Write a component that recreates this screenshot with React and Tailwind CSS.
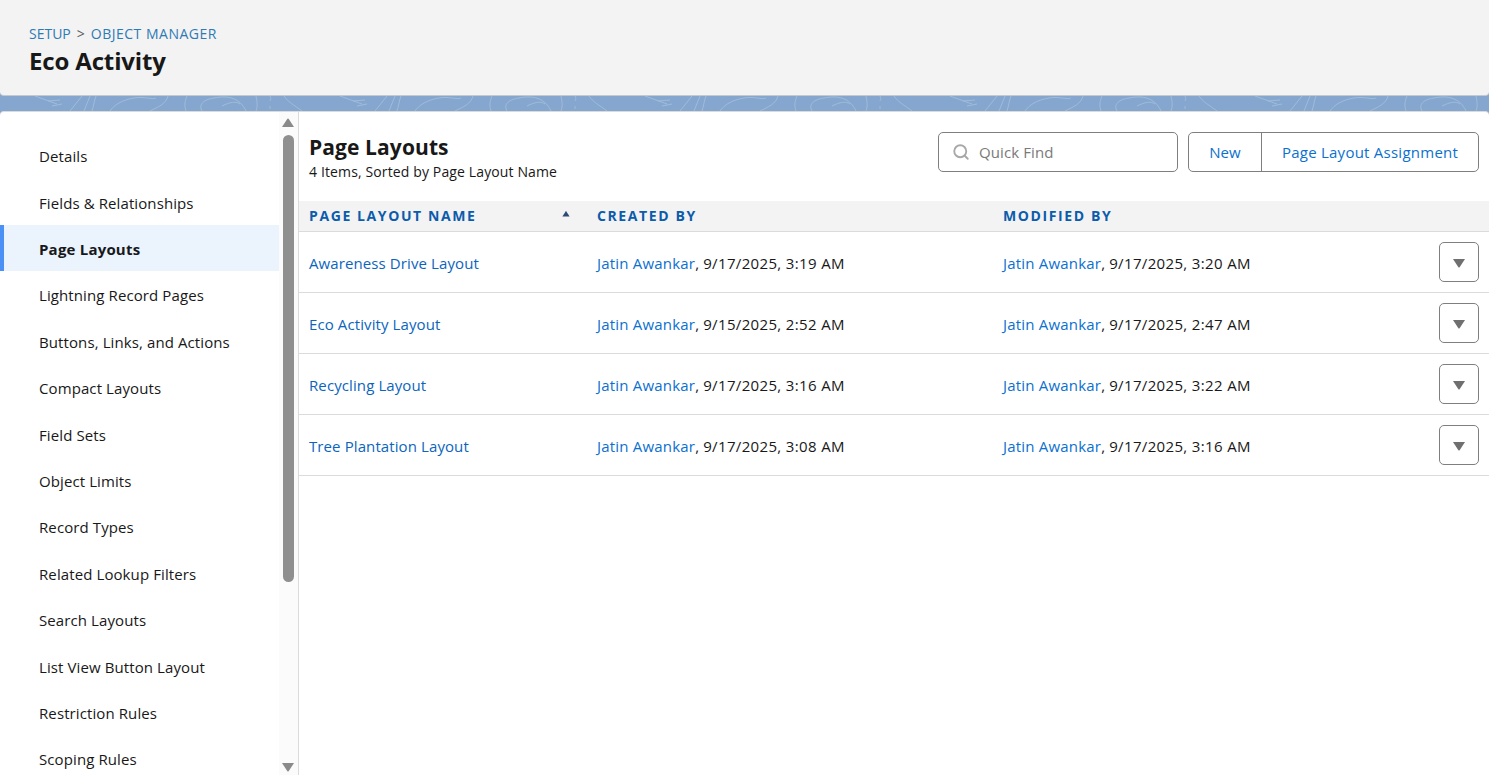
import { Search } from 'lucide-react'

const menu = [
  'Details',
  'Fields & Relationships',
  'Page Layouts',
  'Lightning Record Pages',
  'Buttons, Links, and Actions',
  'Compact Layouts',
  'Field Sets',
  'Object Limits',
  'Record Types',
  'Related Lookup Filters',
  'Search Layouts',
  'List View Button Layout',
  'Restriction Rules',
  'Scoping Rules',
]

const rows = [
  { name: 'Awareness Drive Layout', created: '9/17/2025, 3:19 AM', modified: '9/17/2025, 3:20 AM' },
  { name: 'Eco Activity Layout', created: '9/15/2025, 2:52 AM', modified: '9/17/2025, 2:47 AM' },
  { name: 'Recycling Layout', created: '9/17/2025, 3:16 AM', modified: '9/17/2025, 3:22 AM' },
  { name: 'Tree Plantation Layout', created: '9/17/2025, 3:08 AM', modified: '9/17/2025, 3:16 AM' },
]

const Banner = () => (
  <svg className="block w-full h-[15px]" xmlns="http://www.w3.org/2000/svg">
    <defs>
      <pattern id="topo" width="305" height="15" patternUnits="userSpaceOnUse">
        <g fill="none" stroke="#a0bbd9" strokeWidth="1">
          <path d="M35 0l22 8M48 5l12-1M52 10l10-2M70 15l12-15M84 15l6-15" />
          <path d="M92 15c2-6 2-10 4-15M110 15c4-6 12-11 24-13 10-2 18 2 22 0M150 15c8-4 16-7 18-15" />
          <path d="M186 15c-2-6-1-10 1-15M202 15c-3-5-1-11 12-13 14-3 26 0 32 13M222 10c8-4 14-5 18-2" />
          <path d="M256 15c2-5 1-10 0-15M270 0c1 2 1 3 0 5M270 10v3M284 0c4 6 10 9 18 15" />
        </g>
      </pattern>
    </defs>
    <rect width="100%" height="15" fill="url(#topo)" />
  </svg>
)

const Triangle = ({ down, className }) => (
  <svg className={className} viewBox="0 0 14 10" xmlns="http://www.w3.org/2000/svg">
    <path
      d={down ? 'M1 1h12L7.6 9.2a.8.8 0 0 1-1.2 0z' : 'M1 9h12L7.6.8a.8.8 0 0 0-1.2 0z'}
      fill="currentColor"
    />
  </svg>
)

const Sidebar = () => (
  <div className="flex w-[299px] shrink-0 border-r border-[#dddbda]">
    <div className="w-[279px] pt-[20.3px] overflow-hidden">
      {menu.map((item) =>
        item === 'Page Layouts' ? (
          <div
            key={item}
            className="h-[46.4px] flex items-center pl-[35px] pt-[2px] border-l-4 border-[#4a90f5] bg-[#ebf3fc] font-bold tracking-[0.2px] text-[#16181b]"
          >
            {item}
          </div>
        ) : (
          <div key={item} className="h-[46.4px] flex items-center pl-[39px] pt-[2px] text-[#181818]">
            {item}
          </div>
        )
      )}
    </div>
    <div className="w-[19px] bg-[#fbfbfb] flex flex-col items-center text-[#8a8a8a] pr-[1px]">
      <Triangle className="w-[14px] h-[10px] mt-[6px] shrink-0" />
      <div className="w-[11px] h-[447px] mt-[7px] rounded-full bg-[#8f8f8f] shrink-0" />
      <Triangle down className="w-[14px] h-[10px] mt-[180px] shrink-0" />
    </div>
  </div>
)

const Person = ({ when }) => (
  <div className="pt-[2px] text-[#181818]">
    <a className="text-[#0b70d0] tracking-[0.2px]">Jatin Awankar</a>,{' '}
    <span className="tracking-[0.35px]">{when}</span>
  </div>
)

const Row = ({ row }) => (
  <div className="grid grid-cols-[288px_406px_1fr_auto] items-center h-[61px] pl-[10px] pr-[10px] border-b border-[#dddbda]">
    <a className="pt-[2px] text-[#0b65bd]">{row.name}</a>
    <Person when={row.created} />
    <Person when={row.modified} />
    <button className="w-[40px] h-[40px] rounded-[5px] border border-[#7f7f7f] bg-white flex items-center justify-center text-[#6f6f6f]">
      <Triangle down className="w-[14px] h-[10px] mt-[2px]" />
    </button>
  </div>
)

export default function App() {
  return (
    <div className="h-[775px] overflow-hidden bg-[#84a6cf] text-[15px] font-['Open_Sans','Noto_Sans',sans-serif] tracking-[0.1px]">
      <div className="h-[96px] bg-[#f3f3f3] rounded-b-[4px] border-b border-[#c4c9d0] pl-[29px] pt-[24px]">
        <div className="flex text-[14px] leading-[19px] text-[#2e7ab5] tracking-normal">
          SETUP
          <span className="text-[#5c5c5c] ml-[6px] mr-[6px]">&gt;</span>
          <span className="tracking-[0.5px]">OBJECT MANAGER</span>
        </div>
        <div className="text-[24px] leading-[36px] font-bold text-[#181818] tracking-[-0.15px]">Eco Activity</div>
      </div>
      <Banner />
      <div className="flex h-[664px] bg-white border-t border-[#dddbda] rounded-t-[4px]">
        <Sidebar />
        <div className="flex-1 min-w-0">
          <div className="flex justify-between h-[89px] pl-[10px] pr-[10px] pt-[20px]">
            <div>
              <div className="text-[21px] leading-[31px] font-bold text-[#181818] tracking-[0.1px]">Page Layouts</div>
              <div className="text-[14px] leading-[18px] text-[#181818] tracking-[0.13px]">4 Items, Sorted by Page Layout Name</div>
            </div>
            <div className="flex gap-[10px] h-[40px]">
              <div className="w-[240px] rounded-[5px] border border-[#7f7f7f] flex items-center pl-[13px] gap-[9px] text-[#7a7a7a]">
                <Search size={18} className="text-[#a8a8a8]" strokeWidth={2.5} />
                <span className="pt-[1px]">Quick Find</span>
              </div>
              <div className="flex w-[291px] rounded-[5px] border border-[#7f7f7f] text-[#0b70d0]">
                <div className="w-[73px] flex items-center justify-center border-r border-[#7f7f7f]">New</div>
                <div className="flex-1 flex items-center justify-center tracking-[0.25px]">Page Layout Assignment</div>
              </div>
            </div>
          </div>
          <div className="grid grid-cols-[288px_406px_1fr] items-center h-[31px] pl-[10px] pb-[2px] bg-[#f3f3f3] border-b border-[#dddbda] text-[14px] font-bold tracking-[1.6px] text-[#0b5cab]">
            <div className="flex items-center justify-between pr-[26px]">
              PAGE LAYOUT NAME
              <Triangle className="w-[10px] h-[6px] text-[#2c4a74] mb-[3px]" />
            </div>
            <div>CREATED BY</div>
            <div>MODIFIED BY</div>
          </div>
          {rows.map((row) => (
            <Row key={row.name} row={row} />
          ))}
        </div>
      </div>
    </div>
  )
}
